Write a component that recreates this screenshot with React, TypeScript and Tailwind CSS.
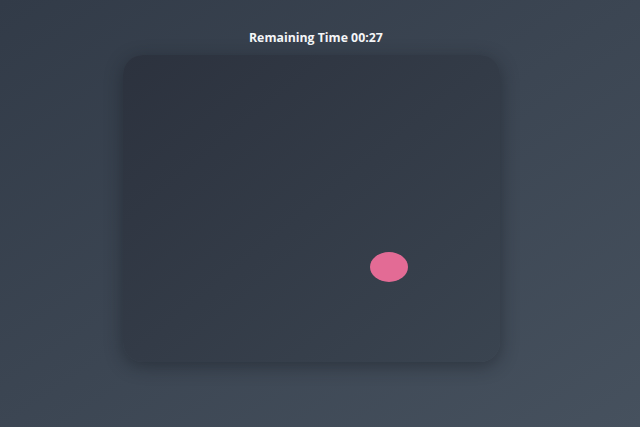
export default function App() {
  return (
    <div className="w-[640px] h-[427px] overflow-hidden bg-gradient-to-br from-[#323b48] to-[#46515e] font-['Open_Sans',sans-serif]">
      <div className="pt-[29px] pl-[249px] h-[55px]">
        <p className="text-[12.3px] font-bold text-[#f5f6f8]">Remaining Time 00:27</p>
      </div>
      <div className="ml-[123px] relative w-[377px] h-[307px] rounded-[20px] bg-gradient-to-br from-[#2c323e] to-[#3a4450] shadow-[0_4px_18px_rgba(20,24,32,0.45)]">
        <div className="absolute left-[247px] top-[197px] w-[38px] h-[30px] rounded-[50%] bg-[#e36b95]" />
      </div>
    </div>
  );
}
